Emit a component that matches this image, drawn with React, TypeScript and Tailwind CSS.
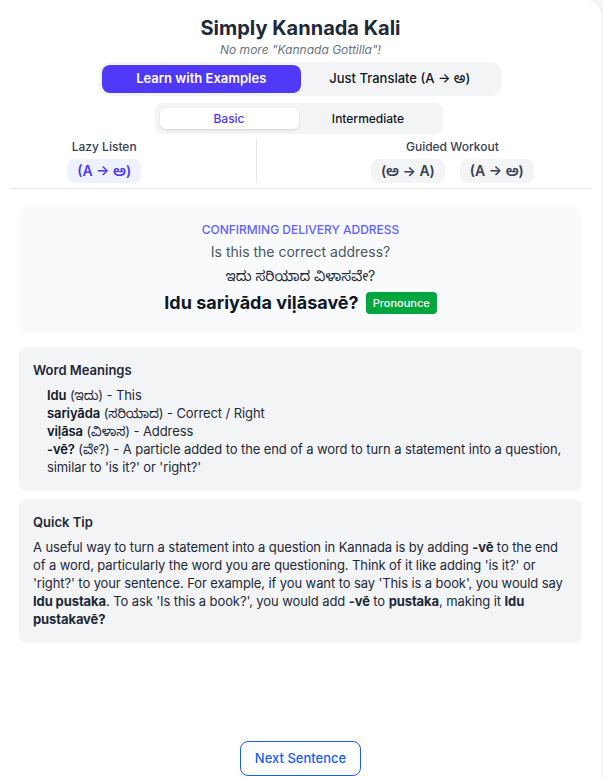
import React, { useState } from 'react';

// Lista de palabras con su significado
const words = [
  { roman: 'Idu', kannada: 'ಇದು', meaning: 'This' },
  { roman: 'sariyāda', kannada: 'ಸರಿಯಾದ', meaning: 'Correct / Right' },
  { roman: 'viḷāsa', kannada: 'ವಿಳಾಸ', meaning: 'Address' },
  {
    roman: '-vē?',
    kannada: 'ವೇ?',
    meaning: "A particle added to the end of a word to turn a statement into a question, similar to 'is it?' or 'right?'",
  },
];

const App: React.FC = () => {
  const [mode, setMode] = useState<'examples' | 'translate'>('examples');
  const [level, setLevel] = useState<'basic' | 'intermediate'>('basic');

  return (
    <div
      className="min-h-screen bg-gray-100 text-gray-900"
      style={{ fontFamily: 'Inter, "Noto Sans", "Noto Sans Kannada", sans-serif' }}
    >
      <div className="w-[601px] h-[778px] bg-white rounded-tr-2xl flex flex-col px-[10px] pt-[14px] pb-[2px]">
        {/* Header */}
        <div className="flex flex-col items-center">
          <h1 className="text-xl font-bold text-gray-800 leading-7">Simply Kannada Kali</h1>
          <p className="text-xs italic text-gray-500 leading-4">No more "Kannada Gottilla"!</p>

          <div className="mt-[4px] flex bg-gray-100 rounded-xl p-[3px] w-[403px]">
            <button
              onClick={() => setMode('examples')}
              className={`flex-1 h-[28px] rounded-lg text-[13px] font-semibold ${mode === 'examples' ? 'bg-indigo-600 text-white' : 'text-gray-900 font-medium'}`}
            >
              Learn with Examples
            </button>
            <button
              onClick={() => setMode('translate')}
              className={`flex-1 h-[28px] rounded-lg text-[13px] font-medium ${mode === 'translate' ? 'bg-indigo-600 text-white' : 'text-gray-900'}`}
            >
              Just Translate (A → ಅ)
            </button>
          </div>

          <div className="mt-[7px] flex bg-gray-100 rounded-lg p-[5px] w-[288px] -translate-x-[2px]">
            <button
              onClick={() => setLevel('basic')}
              className={`flex-1 h-[21px] rounded-md text-xs font-medium ${level === 'basic' ? 'bg-white shadow text-indigo-600' : 'text-gray-900'}`}
            >
              Basic
            </button>
            <button
              onClick={() => setLevel('intermediate')}
              className={`flex-1 h-[21px] rounded-md text-xs font-medium ${level === 'intermediate' ? 'bg-white shadow text-indigo-600' : 'text-gray-900'}`}
            >
              Intermediate
            </button>
          </div>
        </div>

        {/* Modos */}
        <div className="mt-[5px] flex justify-around items-stretch pb-[5px] border-b border-gray-200">
          <div className="flex flex-col items-center">
            <span className="text-xs font-medium text-gray-700 leading-4">Lazy Listen</span>
            <button className="mt-[4px] h-[24px] px-[10px] rounded-lg bg-indigo-50 text-indigo-600 text-sm font-semibold">
              (A → ಅ)
            </button>
          </div>
          <div className="w-px bg-gray-200" />
          <div className="flex flex-col items-center">
            <span className="text-xs font-medium text-gray-700 leading-4">Guided Workout</span>
            <div className="mt-[4px] flex gap-[15px]">
              <button className="h-[24px] px-[10px] rounded-lg bg-gray-100 text-gray-700 text-sm font-semibold">(ಅ → A)</button>
              <button className="h-[24px] px-[10px] rounded-lg bg-gray-100 text-gray-700 text-sm font-semibold">(A → ಅ)</button>
            </div>
          </div>
        </div>

        {/* Frase */}
        <div className="mx-[9px] mt-[18px] bg-gray-50 rounded-lg h-[125px] flex flex-col items-center pt-[15px]">
          <span className="text-xs font-medium uppercase text-indigo-500 leading-4">Confirming Delivery Address</span>
          <span className="mt-[4px] text-sm text-gray-600 leading-5">Is this the correct address?</span>
          <span className="mt-[4px] text-sm text-gray-800 leading-5">ಇದು ಸರಿಯಾದ ವಿಳಾಸವೇ?</span>
          <div className="mt-[3px] flex items-center gap-[7px]">
            <span className="text-lg font-bold text-gray-900 leading-7">Idu sariyāda viḷāsavē?</span>
            <button className="h-[22px] px-[7px] rounded bg-green-600 text-white text-[11px] font-medium">Pronounce</button>
          </div>
        </div>

        {/* Significados */}
        <div className="mx-[9px] mt-[15px] bg-gray-100 rounded-lg px-[14px] pt-[13px] pb-[15px]">
          <h2 className="text-[13px] font-semibold text-gray-800 leading-5">Word Meanings</h2>
          <ul className="mt-[6px] pl-[14px] text-[13px] tracking-[-0.1px] text-gray-800 leading-[18px]">
            {words.map((w) => (
              <li key={w.roman}>
                <span className="font-semibold text-gray-900">{w.roman}</span> ({w.kannada}) - {w.meaning}
              </li>
            ))}
          </ul>
        </div>

        {/* Consejo */}
        <div className="mx-[9px] mt-[8px] bg-gray-100 rounded-lg px-[14px] pt-[13px] pb-[15px]">
          <h2 className="text-[13px] font-semibold text-gray-800 leading-5">Quick Tip</h2>
          <p className="mt-[6px] text-[13px] tracking-[-0.1px] text-gray-800 leading-[18px]">
            A useful way to turn a statement into a question in Kannada is by adding <b>-vē</b> to the end of a word,
            particularly the word you are questioning. Think of it like adding 'is it?' or 'right?' to your sentence.
            For example, if you want to say 'This is a book', you would say <b>Idu pustaka</b>. To ask 'Is this a
            book?', you would add <b>-vē</b> to <b>pustaka</b>, making it <b>Idu pustakavē?</b>
          </p>
        </div>

        <div className="mt-auto flex justify-center">
          <button className="w-[121px] h-[35px] rounded-lg border border-blue-600 text-blue-600 text-[13px] font-medium bg-white">
            Next Sentence
          </button>
        </div>
      </div>
    </div>
  );
};

export default App;
